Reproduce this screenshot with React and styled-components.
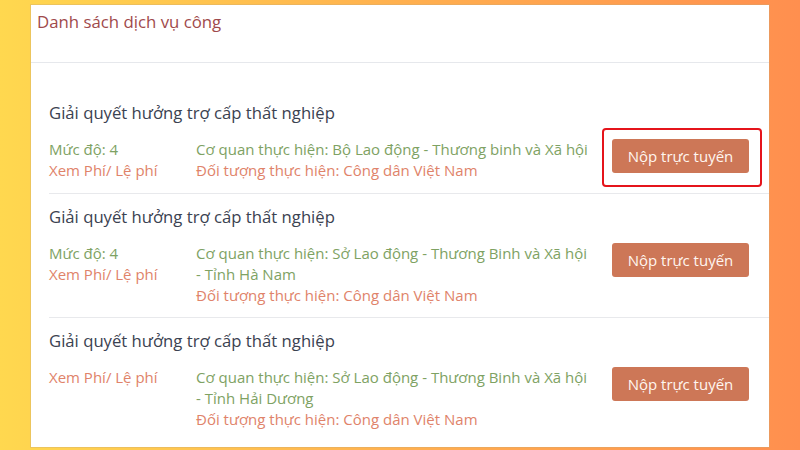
import styled, { createGlobalStyle } from "styled-components";

const GlobalStyle = createGlobalStyle`
  html, body {
    margin: 0;
    height: 100%;
  }
  body {
    background: linear-gradient(90deg, #ffd84f 0%, #ffb04f 50%, #ff8f4f 100%);
    font-family: "Open Sans", Lato, "Liberation Sans", sans-serif;
    overflow: hidden;
  }
`;

const Panel = styled.div`
  margin: 5px 31px 0;
  height: 442px;
  background: #ffffff;
  box-shadow: 0 0 0 1px rgba(200, 170, 120, 0.35);
`;

const PanelHeader = styled.div`
  height: 58px;
  padding: 5px 6px 0;
  box-sizing: border-box;
  border-bottom: 1px solid #e6e8ec;
  font-size: 16.8px;
  color: #9f4a4c;
  line-height: 24px;
`;

const List = styled.div`
  padding: 40px 0 0 18px;
`;

const Item = styled.div`
  padding: ${(p) => (p.$first ? "0 0 12px" : "13px 0 11px")};
  border-bottom: ${(p) => (p.$last ? "none" : "1px solid #e8e9ec")};
`;

const Title = styled.div`
  font-size: 16.7px;
  line-height: 20px;
  color: #3b4251;
  margin-bottom: 16px;
`;

const Row = styled.div`
  display: flex;
  align-items: flex-start;
`;

const Meta = styled.div`
  width: 147px;
  flex-shrink: 0;
`;

const Info = styled.div`
  width: 405px;
  flex-shrink: 0;
`;

const Line = styled.div`
  font-size: 15px;
  line-height: 21px;
  color: ${(p) => (p.$tone === "green" ? "#7ea263" : "#e0836a")};
`;

const NoWrap = styled.span`
  white-space: nowrap;
`;

const Actions = styled.div`
  margin-left: auto;
  padding-right: 20px;
`;

const SubmitButton = styled.button`
  position: relative;
  width: 137px;
  height: 34px;
  border: none;
  border-radius: 3px;
  background: #cd7757;
  color: #fff6f0;
  font-family: inherit;
  font-size: 15px;
  cursor: pointer;

  &::after {
    content: "";
    display: ${(p) => (p.$highlighted ? "block" : "none")};
    position: absolute;
    top: -11px;
    bottom: -14px;
    left: -10px;
    right: -13px;
    border: 2.5px solid #e5141b;
    border-radius: 4px;
  }
`;

const services = [
  {
    level: "Mức độ: 4",
    agency: "Cơ quan thực hiện: Bộ Lao động - Thương binh và Xã hội",
  },
  {
    level: "Mức độ: 4",
    agency: "Cơ quan thực hiện: Sở Lao động - Thương Binh và Xã hội",
    region: "- Tỉnh Hà Nam",
  },
  {
    level: null,
    agency: "Cơ quan thực hiện: Sở Lao động - Thương Binh và Xã hội",
    region: "- Tỉnh Hải Dương",
  },
];

export default function App() {
  return (
    <>
      <GlobalStyle />
      <Panel>
        <PanelHeader>Danh sách dịch vụ công</PanelHeader>
        <List>
          {services.map((s, i) => (
            <Item key={i} $first={i === 0} $last={i === services.length - 1}>
              <Title>Giải quyết hưởng trợ cấp thất nghiệp</Title>
              <Row>
                <Meta>
                  {s.level && <Line $tone="green">{s.level}</Line>}
                  <Line>Xem Phí/ Lệ phí</Line>
                </Meta>
                <Info>
                  <Line $tone="green">
                    {s.agency}
                    {s.region && (
                      <>
                        {" "}
                        <NoWrap>{s.region}</NoWrap>
                      </>
                    )}
                  </Line>
                  <Line>Đối tượng thực hiện: Công dân Việt Nam</Line>
                </Info>
                <Actions>
                  <SubmitButton $highlighted={i === 0}>Nộp trực tuyến</SubmitButton>
                </Actions>
              </Row>
            </Item>
          ))}
        </List>
      </Panel>
    </>
  );
}
